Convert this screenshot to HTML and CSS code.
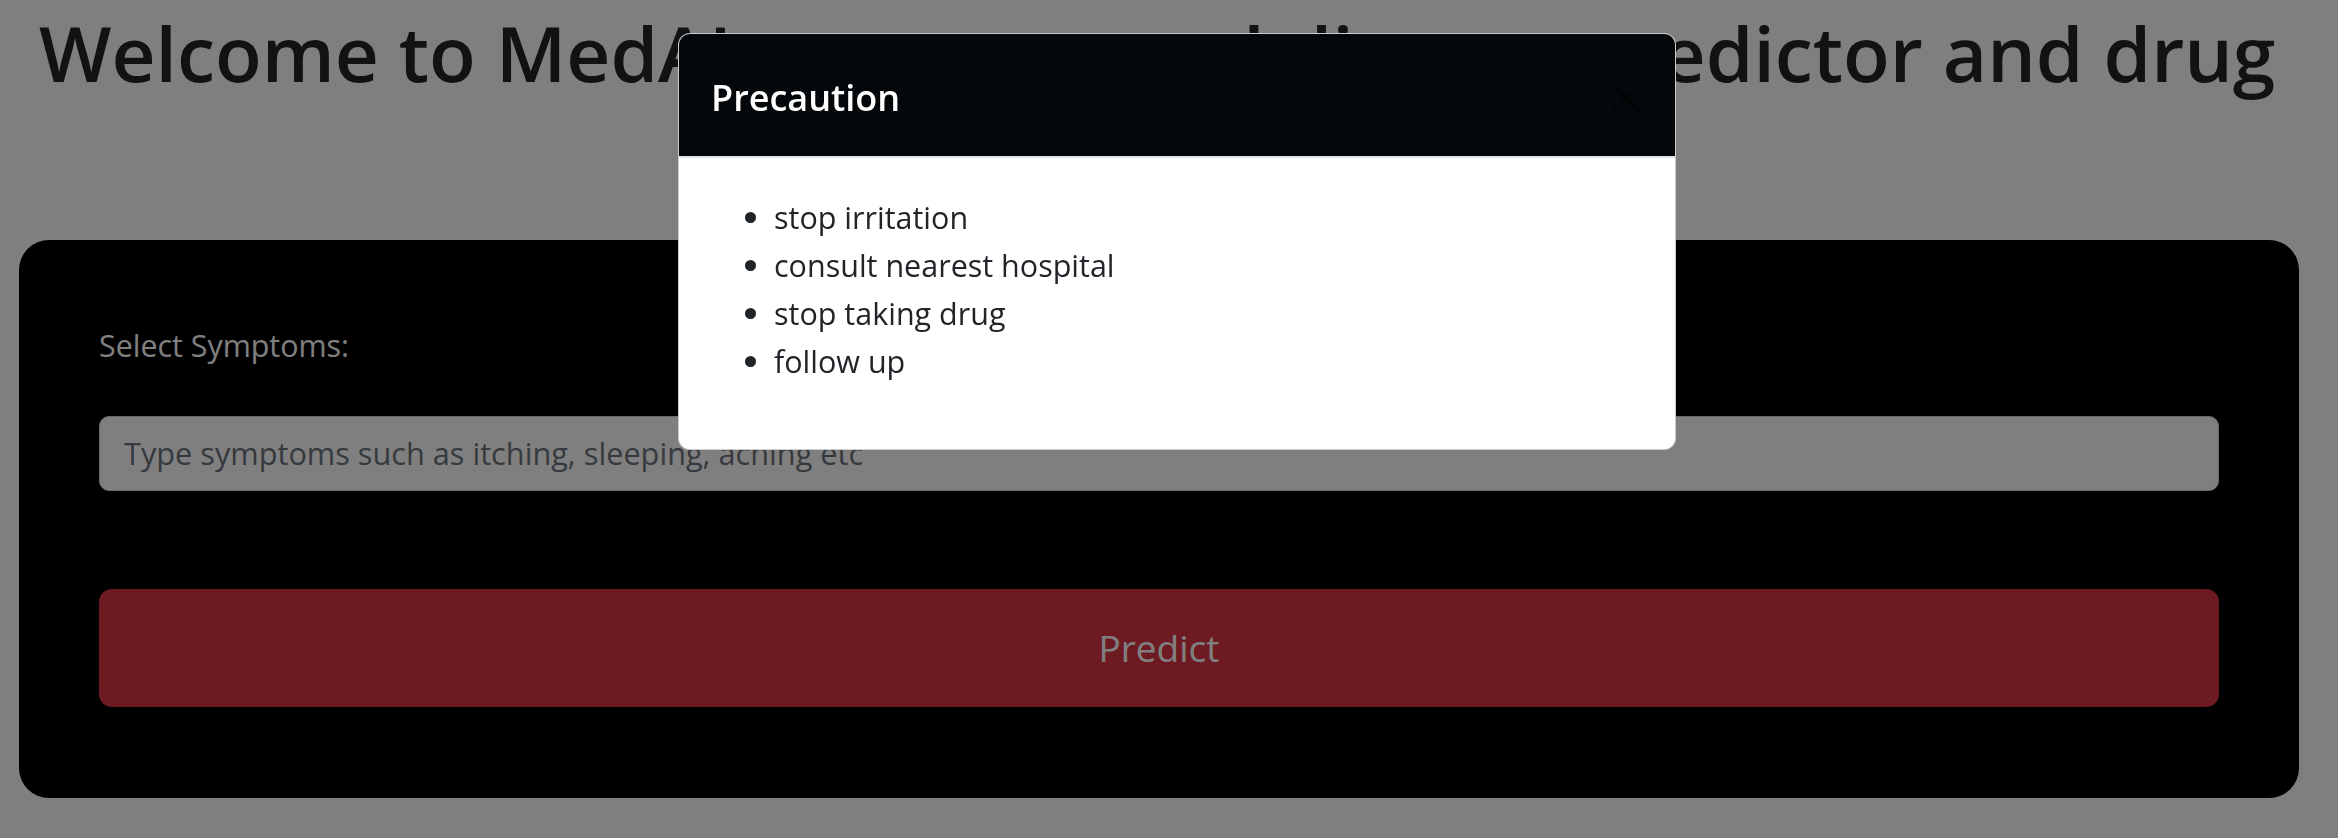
FILE: index.html
```html
<!DOCTYPE html>
<html lang="en">
<head>
<meta charset="utf-8">
<title>MedAI</title>
<link rel="stylesheet" href="styles.css">
</head>
<body>
<main class="page">
  <h1 class="headline">Welcome to MedAI your personal disease predictor and drug</h1>
  <section class="card">
    <form class="form">
      <label class="label" for="symptoms">Select Symptoms:</label>
      <input class="input" id="symptoms" type="text" placeholder="Type symptoms such as itching, sleeping, aching etc">
      <button class="predict" type="button">Predict</button>
    </form>
  </section>
</main>
<div class="backdrop"></div>
<div class="modal" role="dialog">
  <div class="modal-header">
    <h5 class="modal-title">Precaution</h5>
    <button class="close" type="button" aria-label="Close">
      <svg width="32" height="32" viewBox="0 0 32 32"><path d="M2 2 L30 30 M30 2 L2 30" stroke="#000" stroke-width="2.4" fill="none"/></svg>
    </button>
  </div>
  <div class="modal-body">
    <ul class="list">
      <li>stop irritation</li>
      <li>consult nearest hospital</li>
      <li>stop taking drug</li>
      <li>follow up</li>
    </ul>
  </div>
</div>
</body>
</html>
```
FILE: styles.css
```css
* { box-sizing: border-box; }
html, body { margin: 0; padding: 0; }
body {
  background: #fff;
  font-family: "Open Sans", "Liberation Sans", sans-serif;
  color: #212529;
  width: 2338px;
  height: 838px;
  overflow: hidden;
}
.page { padding: 0 39px 0 19px; }
.headline {
  margin: 7px 0 141px;
  padding-left: 20px;
  font-size: 76.6px;
  font-weight: 600;
  line-height: 1.2;
  color: #212529;
  white-space: nowrap;
}
.card {
  background: #000;
  border-radius: 30px;
  padding: 83px 80px 91px;
}
.form { display: flex; flex-direction: column; }
.label {
  color: #fff;
  font-size: 30.4px;
  line-height: 45px;
  margin-bottom: 48px;
}
.input {
  height: 75px;
  border: 1px solid #ced4da;
  border-radius: 10px;
  background: #fff;
  padding: 0 24px;
  font-family: inherit;
  font-size: 30.7px;
  color: #212529;
}
.input::placeholder { color: #6c757d; }
.predict {
  margin-top: 98px;
  height: 118px;
  border: 0;
  border-radius: 13px;
  background: #dc3545;
  color: #fff;
  font-family: inherit;
  font-size: 37px;
}
.backdrop {
  position: fixed;
  inset: 0;
  background: rgba(0, 0, 0, 0.5);
}
.modal {
  position: fixed;
  left: 678px;
  top: 33px;
  width: 998px;
  background: #fff;
  border: 1px solid rgba(0, 0, 0, 0.2);
  border-radius: 12px;
  overflow: hidden;
}
.modal-header {
  display: flex;
  align-items: center;
  height: 124px;
  padding: 6px 33px 0 32px;
  background: #05080a;
  border-bottom: 2px solid #dee2e6;
}
.modal-title {
  margin: 0;
  color: #fff;
  font-size: 36px;
  font-weight: 600;
  line-height: 1.5;
}
.close {
  margin-left: auto;
  padding: 0;
  border: 0;
  background: transparent;
  opacity: 0.6;
  display: flex;
}
.modal-body { padding: 35px 33px 64px; }
.list {
  margin: 0;
  padding-left: 62px;
  font-size: 30.5px;
  line-height: 48px;
  color: #212529;
}
```
